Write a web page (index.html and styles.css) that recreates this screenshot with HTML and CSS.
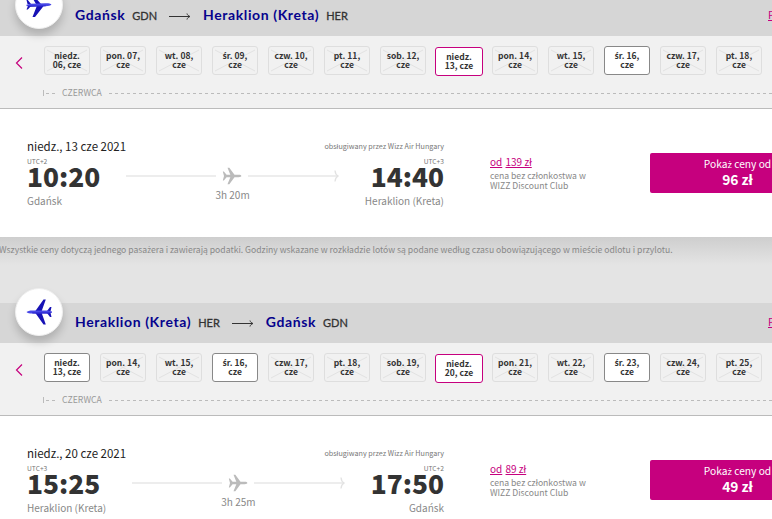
FILE: index.html
```html
<!DOCTYPE html>
<html lang="pl">
<head>
<meta charset="utf-8">
<title>Wybór lotów</title>
<link rel="stylesheet" href="styles.css">
</head>
<body>
<svg width="0" height="0" class="defs">
  <symbol id="plane" viewBox="0 0 24 24"><path d="M1 6.500h1.200L5.500 10.600H10L6.600 2h2.200l6.200 8.600h5c2 0 3.200.6 3.200 1.400s-1.200 1.400-3.200 1.400h-5L8.800 22H6.600l3.400-8.600H5.500L2.200 17.500H1L2.400 12z"/></symbol>
  <symbol id="jet" viewBox="0 0 26 26"><path fill="#1712b5" d="M9 12.500 17.500.5h2.300L15.500 12.500zM9 13.500 17.500 25.500h2.300L15.500 13.500zM21 12l3-4h1.500L24.500 12.200zM21 14l3 4h1.500L24.500 13.800z"/><path fill="#4646e6" d="M.5 13c1-1 3-1.600 6-1.600H22l4 1v1.200l-4 1H6.500c-3 0-5-.6-6-1.600z"/><path fill="#221dc9" d="M6 13.500h20v.200l-4 .900H6.500z"/></symbol>
  <symbol id="jet-side" viewBox="0 0 26 26"><path fill="#1712b5" d="M15 12 7.500 3.500H5L10 12zM18 13.500 9 25H6.500L11 13.500zM5 12 1.800 8H.5l1 4zM5 14l-3.200 3.500H.5L2 14z"/><path fill="#4646e6" d="M25.500 12.500c-1-1-3-1.400-6-1.300L4 11.800l-3.500 1v1l4 .8 15-.4c3 0 5-.7 6-1.700z"/><path fill="#221dc9" d="M20 13.500.5 13.700v.2l4 .8 15-.5z"/></symbol>
  <symbol id="arrow" viewBox="0 0 22 8"><path fill="none" stroke="#333" d="M0 4.500h20.500M18 1.500c.3 1.500 1.500 2.500 3 3-1.500.5-2.700 1.500-3 3"/></symbol>
  <symbol id="prev" viewBox="0 0 8 14"><path fill="none" stroke="#c6007e" stroke-width="1.200" d="M7 1.500 1.500 7 7 12.500"/></symbol>
  <symbol id="tip" viewBox="0 0 5 12"><path fill="none" stroke="#e2e2e2" stroke-width="1.300" d="M1 .5c.2 2.500 1.200 4.500 3 5.500-1.800 1-2.800 3-3 5.500"/></symbol>
</svg>
<main class="page" id="page"></main>
<script src="app.js"></script>
</body>
</html>
```
FILE: app.js
```js
const flights = [
  {
    from: 'Gdańsk', fromCode: 'GDN', to: 'Heraklion (Kreta)', toCode: 'HER', dir: 'out', jet: 'jet-side',
    days: ['niedz.|06', 'pon.|07', 'wt.|08', 'śr.|09', 'czw.|10', 'pt.|11', 'sob.|12', 'niedz.|13', 'pon.|14', 'wt.|15', 'śr.|16', 'czw.|17', 'pt.|18'],
    open: [10], date: 'niedz., 13 cze 2021', dep: '10:20', depZone: 'UTC+2', arr: '14:40', arrZone: 'UTC+3',
    time: '3h 20m', full: '139 zł', price: '96 zł'
  },
  {
    from: 'Heraklion (Kreta)', fromCode: 'HER', to: 'Gdańsk', toCode: 'GDN', dir: 'back', jet: 'jet',
    days: ['niedz.|13', 'pon.|14', 'wt.|15', 'śr.|16', 'czw.|17', 'pt.|18', 'sob.|19', 'niedz.|20', 'pon.|21', 'wt.|22', 'śr.|23', 'czw.|24', 'pt.|25'],
    open: [0, 3, 10], date: 'niedz., 20 cze 2021', dep: '15:25', depZone: 'UTC+3', arr: '17:50', arrZone: 'UTC+2',
    time: '3h 25m', full: '89 zł', price: '49 zł'
  }
];

const icon = (id, cls) => `<svg class="${cls}"><use href="#${id}"/></svg>`;
const pl = text => text.replace(/[śż]/g, '<span class="pl">$&</span>');

function day(text, i, open) {
  const [name, num] = text.split('|');
  const state = i === 7 ? 'selected' : open.includes(i) ? 'open' : 'empty';
  const label = name === 'niedz.' ? `niedz.<br>${num}, cze` : `${pl(name)} ${num},<br>cze`;
  const cross = state === 'empty'
    ? '<svg class="cross" viewBox="0 0 46 29"><path d="M3 4l40 21M43 4L3 25"/></svg>' : '';
  return `<button class="day ${state}">${cross}<div>${label}</div></button>`;
}

document.getElementById('page').innerHTML = flights.map(f => `
<section class="flight ${f.dir}">
  <header class="route">
    <div class="badge">${icon(f.jet, 'jet')}</div>
    <b class="city">${f.from}</b><span class="code">${f.fromCode}</span>
    ${icon('arrow', 'arrow')}
    <b class="city">${f.to}</b><span class="code">${f.toCode}</span>
    <a class="more">P</a>
  </header>
  <div class="calendar">
    <div class="days">${icon('prev', 'prev')}${f.days.map((d, i) => day(d, i, f.open)).join('')}</div>
    <div class="month"><i class="start"></i><span>CZERWCA</span><svg class="dashes"><path d="M0 .5H700"/></svg></div>
  </div>
  <div class="card">
    <div class="trip">
      <div class="meta"><span class="date">${f.date}</span><span class="operator">obsługiwany przez Wizz Air Hungary</span></div>
      <div class="legs">
        <div class="stop"><span class="zone">${f.depZone}</span><strong>${f.dep}</strong><span class="place">${f.from}</span></div>
        <div class="path">
          <div class="line"><i></i>${icon('plane', 'plane')}<i></i>${icon('tip', 'tip')}</div>
          <span>${f.time}</span>
        </div>
        <div class="stop end"><span class="zone">${f.arrZone}</span><strong>${f.arr}</strong><span class="place">${f.to}</span></div>
      </div>
    </div>
    <div class="regular"><a>od</a> <a>${f.full}</a><p>cena bez członkostwa w<br>WIZZ Discount Club</p></div>
    <button class="buy"><div>${pl('Pokaż ceny od')}</div><b>${f.price}</b></button>
  </div>
  ${f.dir === 'out' ? `<p class="note">${pl('Wszystkie ceny dotyczą jednego pasażera i zawierają podatki. Godziny wskazane w rozkładzie lotów są podane według czasu obowiązującego w mieście odlotu i przylotu.')}</p>` : ''}
</section>`).join('');
```
FILE: styles.css
```css
* { box-sizing: border-box; }
body { margin: 0; background: #e4e4e4; }
.defs { display: block; }
.page {
  width: 772px; height: 519px; overflow: hidden; color: #333;
  font-family: "Noto Sans CJK JP", "Noto Sans", sans-serif;
}
.page svg { flex: none; }
.pl { font-family: "Noto Sans", sans-serif; font-size: .94em; line-height: 1px; }
.flight { height: 307px; }
.flight.out { margin-top: -4px; }
.route {
  display: flex; align-items: center; height: 40px; padding-left: 15px;
  background: #d6d6d6; position: relative; white-space: nowrap;
  font-family: Lato, sans-serif;
}
.badge {
  width: 48px; height: 48px; margin: -23px 12px 0 0; border-radius: 50%;
  border: 1px solid #eee; background: #fff; flex: none;
  box-shadow: 0 6px 9px rgba(0,0,0,.18);
  display: flex; align-items: center; justify-content: center;
}
.jet { width: 26px; height: 26px; }
.city { color: #06038d; font-size: 14px; line-height: 20px; letter-spacing: .6px; margin-top: -2px; }
.code { font-size: 11px; line-height: 20px; margin-left: 7px; -webkit-text-stroke: .3px #333; }
.arrow { width: 22px; height: 8px; margin: -1px 12px 0 12px; }
.more {
  color: #c6007e; text-decoration: underline; font: 10.500px/20px "Noto Sans CJK JP", sans-serif;
  margin: -2px 0 0 auto; width: 4px;
}
.calendar { height: 73px; background: #f1f1f1; border-bottom: 1px solid #bbb; padding-top: 10px; }
.days { display: flex; height: 30px; gap: 10px; padding-left: 15px; }
.prev { width: 8px; height: 14px; margin: 10px 11px 0 0; }
.day {
  position: relative; width: 46px; height: 29px; padding: 0 0 1px; flex: none;
  border: 1px solid #dedede; border-radius: 3px; background: #f1f1f1;
  font: bold 8.500px/9px "Noto Sans CJK JP", "Noto Sans", sans-serif;
  letter-spacing: .03px;
  color: #333; text-align: center; white-space: nowrap;
}
.day div { position: relative; }
.day.open { background: #fff; border-color: #888; }
.day.selected { width: 48px; margin: 1px -1px 0; background: #fff; border-color: #c6007e; }
.cross { position: absolute; left: -1px; top: -1px; width: 46px; height: 29px; fill: none; stroke: #e2e2e2; }
.month { display: flex; align-items: center; height: 14px; margin-top: 10px; padding-left: 43px; font-size: 8.700px; line-height: 14px; color: #999; }
.start { width: 13px; height: 6px; margin-right: 6px; border-left: 1px solid #bbb; background: repeating-linear-gradient(90deg, transparent 0 2px, #bbb 2px 5px, transparent 5px 6px) 0 3px / 100% 1px no-repeat; }
.month span { margin-top: -1px; }
.page .dashes { flex: 1; height: 1px; margin-left: 7px; min-width: 0; stroke: #bbb; stroke-dasharray: 3 3; }
.card { display: flex; height: 128px; background: #fff; padding-left: 27px; }
.trip { width: 417px; margin-top: 29px; flex: none; }
.meta { display: flex; justify-content: space-between; line-height: 16px; height: 16px; }
.date { font-size: 11.500px; color: #222; }
.operator { font-size: 7.200px; color: #777; }
.legs { display: flex; justify-content: space-between; }
.stop { display: flex; flex-direction: column; }
.stop.end { align-items: flex-end; }
.zone { font-size: 6.700px; line-height: 9px; height: 11px; padding-top: 3px; color: #777; }
.stop strong { font-size: 26.300px; font-weight: 900; line-height: 22px; height: 25px; }
.place { font-size: 10px; line-height: 14px; margin-top: 4px; color: #888; }
.path { width: 213px; margin-top: 10px; text-align: center; font-size: 10px; line-height: 14px; color: #888; }
.line { display: flex; align-items: center; height: 24px; }
.line i { width: 90px; height: 2px; background: #ededed; }
.plane { width: 20px; height: 22px; margin: 0 6px; fill: #bbb; }
.tip { width: 5px; height: 12px; margin-left: -4px; }
.path span { display: block; }
.regular { width: 160px; margin: 46px 0 0 46px; flex: none; font-size: 10px; line-height: 14px; color: #888; word-spacing: 1px; }
.regular a { color: #c6007e; text-decoration: underline; word-spacing: 0; }
.regular p { margin: 1px 0 0; font-size: 8.650px; line-height: 10px; word-spacing: 0; }
.buy {
  width: 178px; height: 40px; margin-top: 44px; flex: none; padding: 0 3px 2px 0; border: 0;
  border-radius: 2px; background: #c6007e; color: #fff;
  font: 10.200px/15px "Noto Sans CJK JP", "Noto Sans", sans-serif;
}
.buy b { display: block; font-size: 13.800px; line-height: 17px; }
.note {
  height: 66px; margin: 0; padding-top: 4px; white-space: nowrap; text-indent: -1px;
  background: linear-gradient(#cecece, #e4e4e4 28px);
  font-size: 8.620px; line-height: 16px; color: #888;
}
```
